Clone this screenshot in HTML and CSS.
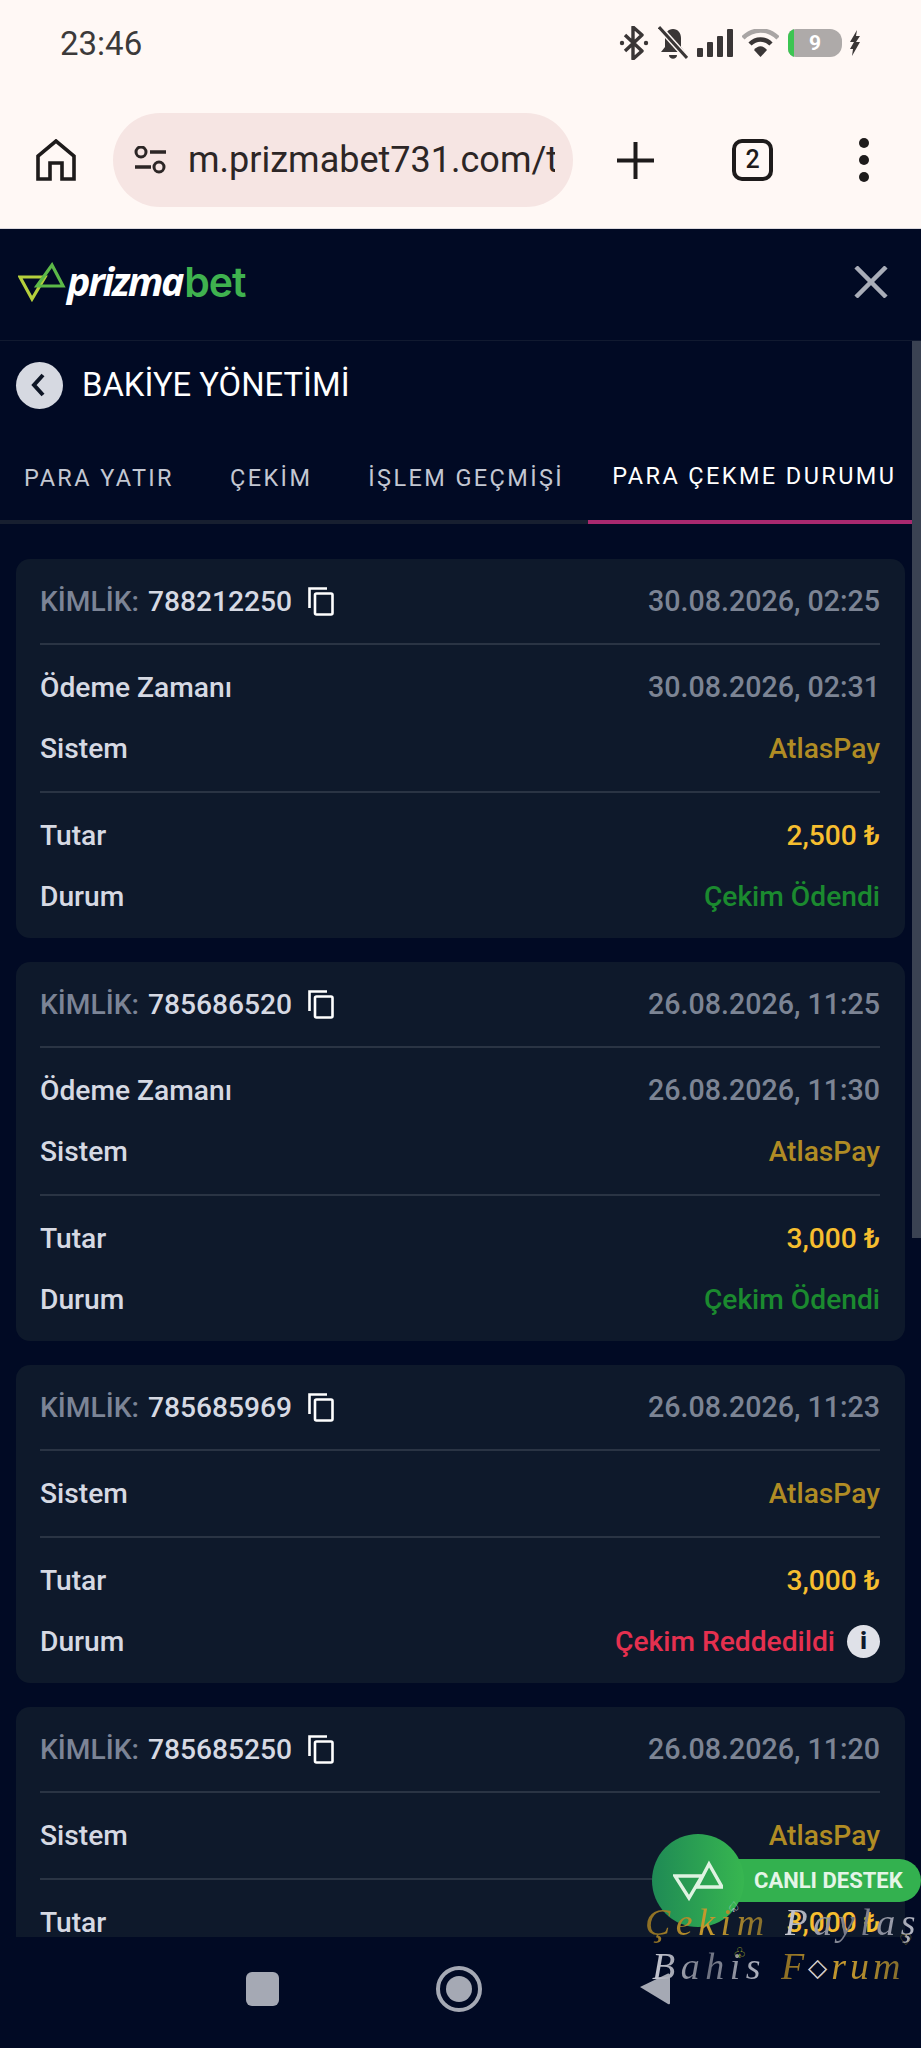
FILE: index.html
```html
<!DOCTYPE html>
<html lang="tr">
<head>
  <meta charset="UTF-8" />
  <title>Bakiye Yönetimi</title>
  <link rel="stylesheet" href="styles.css">
</head>
<body>
<div class="screen">

  <!-- Android / Chrome -->
  <div class="chrome">
    <div class="status">
      <span class="clock">23:46</span>
      <div class="status-icons">
        <svg width="30" height="34" viewBox="0 0 30 34"><path d="M6 9 L23 25 L14 33 V1 L23 9 L6 25" fill="none" stroke="#3a3636" stroke-width="3.4" stroke-linejoin="round"/><circle cx="3" cy="17" r="2.2" fill="#3a3636"/><circle cx="27" cy="17" r="2.2" fill="#3a3636"/></svg>
        <svg width="30" height="34" viewBox="0 0 30 34"><path d="M15 3c-5 0-8 4-8 9v9l-4 5h24l-4-5v-9c0-5-3-9-8-9z" fill="#3a3636"/><path d="M11 29h8c0 5-8 5-8 0z" fill="#3a3636"/><path d="M2 2 L29 32" stroke="#fff8f5" stroke-width="6"/><path d="M1 1 L29 32" stroke="#3a3636" stroke-width="3"/></svg>
        <svg width="36" height="28" viewBox="0 0 36 28"><g fill="#3a3636"><rect x="0" y="19" width="6" height="9" rx="1"/><rect x="10" y="13" width="6" height="15" rx="1"/><rect x="20" y="7" width="6" height="21" rx="1"/><rect x="30" y="0" width="6" height="28" rx="1"/></g></svg>
        <svg width="37" height="28" viewBox="0 0 37 28"><path d="M1 9 C11 -1 26 -1 36 9" fill="none" stroke="#a9a5a4" stroke-width="4.5"/><path d="M8 15 C14 9 23 9 29 15" fill="none" stroke="#3a3636" stroke-width="4.5"/><path d="M12 21 C16 16 21 16 25 21 L18.500 28z" fill="#3a3636"/></svg>
        <div class="battery"><span class="battery-level"></span><span class="battery-num">9</span></div>
        <svg class="bolt" width="12" height="26" viewBox="0 0 12 26"><path d="M8 0 L1 12 L5 12 L1 19 L4 19 L3 26 L11 12 L7 12 L11 6 L7 6z" fill="#3a3636"/></svg>
      </div>
    </div>
    <div class="toolbar">
      <svg class="home-icon" width="40" height="42" viewBox="0 0 40 42"><path d="M2 40 V17 L20 2 L38 17 V40 H26 V24 H14 V40z" fill="none" stroke="#1e1b1b" stroke-width="3.600" stroke-linejoin="miter"/></svg>
      <div class="address">
        <svg width="33" height="28" viewBox="0 0 33 28"><g fill="none" stroke="#2c2626" stroke-width="3"><circle cx="7" cy="6" r="5"/><circle cx="25" cy="21" r="5"/></g><path d="M16 6h16M1 21h16" stroke="#2c2626" stroke-width="3.400"/></svg>
        <span class="url">m.prizmabet731.com/t</span>
      </div>
      <svg class="plus-icon" width="37" height="37" viewBox="0 0 37 37"><path d="M18.500 0v37M0 18.500h37" stroke="#1e1b1b" stroke-width="4"/></svg>
      <div class="tab-count">2</div>
      <div class="dots"><i></i><i></i><i></i></div>
    </div>
  </div>

  <!-- Site header -->
  <header class="site-header">
    <div class="logo">
      <svg width="48" height="40" viewBox="0 0 48 40"><path d="M2 15 H27 L14 37z" fill="none" stroke="#b5cf3c" stroke-width="3.200"/><path d="M34 3 L45 24 H19z" fill="none" stroke="#5cb848" stroke-width="3.200"/></svg>
      <span class="logo-a">prizma</span><span class="logo-b">bet</span>
    </div>
    <svg width="34" height="32" viewBox="0 0 34 32"><path d="M2 1 L32 31 M32 1 L2 31" stroke="#a9adb8" stroke-width="4.500"/></svg>
  </header>

  <div class="panel">
    <div class="title-row">
      <div class="back-btn"><svg width="16" height="24" viewBox="0 0 16 24"><path d="M13 2 L4 12 L13 22" fill="none" stroke="#0e1626" stroke-width="4"/></svg></div>
      <h1>BAKİYE YÖNETİMİ</h1>
    </div>

    <nav class="tabs">
      <a>PARA YATIR</a>
      <a>ÇEKİM</a>
      <a>İŞLEM GEÇMİŞİ</a>
      <a class="active">PARA ÇEKME DURUMU</a>
    </nav>

    <div class="list">

      <div class="card">
        <div class="sec">
          <div class="row">
            <div class="id"><span class="id-label">KİMLİK:</span> <span>788212250</span>
              <svg class="copy" width="26" height="29" viewBox="0 0 26 29"><path d="M1.500 21V1.500H19" fill="none" stroke="#fff" stroke-width="2.600"/><rect x="7" y="6.500" width="17.500" height="21" rx="1.500" fill="none" stroke="#fff" stroke-width="2.600"/></svg>
            </div>
            <span class="muted">30.08.2026, 02:25</span>
          </div>
        </div>
        <div class="sec">
          <div class="row"><span>Ödeme Zamanı</span><span class="muted">30.08.2026, 02:31</span></div>
          <div class="row"><span>Sistem</span><span class="system">AtlasPay</span></div>
        </div>
        <div class="sec">
          <div class="row"><span>Tutar</span><span class="amount">2,500 ₺</span></div>
          <div class="row"><span>Durum</span><span class="paid">Çekim Ödendi</span></div>
        </div>
      </div>

      <div class="card">
        <div class="sec">
          <div class="row">
            <div class="id"><span class="id-label">KİMLİK:</span> <span>785686520</span>
              <svg class="copy" width="26" height="29" viewBox="0 0 26 29"><path d="M1.500 21V1.500H19" fill="none" stroke="#fff" stroke-width="2.600"/><rect x="7" y="6.500" width="17.500" height="21" rx="1.500" fill="none" stroke="#fff" stroke-width="2.600"/></svg>
            </div>
            <span class="muted">26.08.2026, 11:25</span>
          </div>
        </div>
        <div class="sec">
          <div class="row"><span>Ödeme Zamanı</span><span class="muted">26.08.2026, 11:30</span></div>
          <div class="row"><span>Sistem</span><span class="system">AtlasPay</span></div>
        </div>
        <div class="sec">
          <div class="row"><span>Tutar</span><span class="amount">3,000 ₺</span></div>
          <div class="row"><span>Durum</span><span class="paid">Çekim Ödendi</span></div>
        </div>
      </div>

      <div class="card">
        <div class="sec">
          <div class="row">
            <div class="id"><span class="id-label">KİMLİK:</span> <span>785685969</span>
              <svg class="copy" width="26" height="29" viewBox="0 0 26 29"><path d="M1.500 21V1.500H19" fill="none" stroke="#fff" stroke-width="2.600"/><rect x="7" y="6.500" width="17.500" height="21" rx="1.500" fill="none" stroke="#fff" stroke-width="2.600"/></svg>
            </div>
            <span class="muted">26.08.2026, 11:23</span>
          </div>
        </div>
        <div class="sec">
          <div class="row"><span>Sistem</span><span class="system">AtlasPay</span></div>
        </div>
        <div class="sec">
          <div class="row"><span>Tutar</span><span class="amount">3,000 ₺</span></div>
          <div class="row"><span>Durum</span><div class="status-cell"><span class="rejected">Çekim Reddedildi</span><span class="info">i</span></div></div>
        </div>
      </div>

      <div class="card">
        <div class="sec">
          <div class="row">
            <div class="id"><span class="id-label">KİMLİK:</span> <span>785685250</span>
              <svg class="copy" width="26" height="29" viewBox="0 0 26 29"><path d="M1.500 21V1.500H19" fill="none" stroke="#fff" stroke-width="2.600"/><rect x="7" y="6.500" width="17.500" height="21" rx="1.500" fill="none" stroke="#fff" stroke-width="2.600"/></svg>
            </div>
            <span class="muted">26.08.2026, 11:20</span>
          </div>
        </div>
        <div class="sec">
          <div class="row"><span>Sistem</span><span class="system">AtlasPay</span></div>
        </div>
        <div class="sec">
          <div class="row"><span>Tutar</span><span class="amount">3,000 ₺</span></div>
        </div>
      </div>

    </div>

    <div class="scrollbar"></div>
  </div>

  <!-- Android nav -->
  <div class="navbar">
    <span class="nav-square"></span>
    <span class="nav-circle"><i></i></span>
    <svg width="31" height="32" viewBox="0 0 31 32"><path d="M1 14 L29 0.500 Q31 0 31 2 V30 Q31 32 29 31z" fill="#a5a9b4"/></svg>
  </div>

  <!-- Canlı destek -->
  <div class="support">
    <div class="support-pill">CANLI DESTEK</div>
    <div class="support-circle">
      <svg width="50" height="44" viewBox="0 0 50 44"><path d="M2 17 H29 L16 39z" fill="none" stroke="#dff3e2" stroke-width="3.400"/><path d="M36 5 L49 28 H24z" fill="none" stroke="#dff3e2" stroke-width="3.400"/></svg>
    </div>
  </div>

  <!-- Filigran -->
  <div class="mark mark-top"><span class="gold">Çekim</span> <span class="silver">Paylaş</span></div>
  <div class="mark mark-bottom"><span class="silver">Bahis</span> <span class="gold forum">F<span class="mark-o">◇</span>rum</span></div>
  <span class="suit suit-spade">♤</span>
  <span class="suit suit-club">♧</span>
  <span class="suit suit-heart">♡</span>
</div>
</body>
</html>
```

FILE: styles.css
```css
* {
  box-sizing: border-box;
}

html, body {
  margin: 0;
  padding: 0;
  background: #010a24;
}

body {
  font-family: Roboto, "Liberation Sans", sans-serif;
}

.screen {
  position: relative;
  width: 921px;
  height: 2048px;
  overflow: hidden;
  display: flex;
  flex-direction: column;
}

/* Chrome */
.chrome {
  height: 229px;
  background: #fff8f5;
  border-bottom: 1px solid #dcd9de;
  flex: none;
}

.status {
  height: 86px;
  display: flex;
  align-items: center;
  justify-content: space-between;
  padding: 0 60px 0 60px;
}

.clock {
  font-size: 33px;
  color: #3c3a3a;
}

.status-icons {
  display: flex;
  align-items: center;
  gap: 9px;
}

.battery {
  position: relative;
  width: 54px;
  height: 28px;
  background: #aeaaa9;
  border-radius: 8px 12px 12px 8px;
  overflow: hidden;
  text-align: center;
  font-size: 21px;
  font-weight: 700;
  line-height: 28px;
  color: #fff;
}

.battery-level {
  position: absolute;
  left: 0;
  top: 0;
  bottom: 0;
  width: 6px;
  background: #3cc552;
}

.bolt {
  margin-left: -2px;
}

.toolbar {
  height: 142px;
  display: flex;
  align-items: center;
  padding-top: 6px;
}

.home-icon {
  margin-left: 36px;
}

.address {
  width: 460px;
  height: 94px;
  margin-left: 37px;
  padding: 0 18px 0 21px;
  background: #f6e5e3;
  border-radius: 47px;
  display: flex;
  align-items: center;
  gap: 21px;
}

.address svg {
  flex: none;
}

.url {
  font-size: 36px;
  color: #2c2626;
  white-space: nowrap;
  overflow: hidden;
}

.plus-icon {
  margin-left: 44px;
}

.tab-count {
  width: 41px;
  height: 42px;
  margin-left: 78px;
  border: 4px solid #1e1b1b;
  border-radius: 10px;
  font-size: 25px;
  font-weight: 500;
  line-height: 34px;
  text-align: center;
  color: #1e1b1b;
}

.dots {
  margin-left: 86px;
  display: flex;
  flex-direction: column;
  gap: 7px;
}

.dots i {
  width: 10px;
  height: 10px;
  border-radius: 50%;
  background: #1e1b1b;
}

/* Header */
.site-header {
  height: 112px;
  flex: none;
  padding: 0 33px 6px 18px;
  display: flex;
  align-items: center;
  justify-content: space-between;
  background: #010a24;
  border-bottom: 1px solid #111a30;
}

.logo {
  display: flex;
  align-items: center;
  font-size: 39.500px;
  line-height: 40px;
}

.logo svg {
  margin-right: 1px;
}

.logo-a {
  font-family: "Open Sans", sans-serif;
  font-weight: 700;
  font-style: italic;
  letter-spacing: -2.300px;
  color: #fff;
  margin-bottom: 2px;
}

.logo-b {
  font-family: Inter, sans-serif;
  font-weight: 600;
  font-size: 41px;
  letter-spacing: -1px;
  color: #3fb24f;
  margin-left: 2px;
}

/* Panel */
.panel {
  position: relative;
  flex: 1;
  overflow: hidden;
  background: #010a24;
}

.title-row {
  height: 88px;
  padding-left: 16px;
  display: flex;
  align-items: center;
  gap: 19px;
}

.back-btn {
  width: 47px;
  height: 47px;
  border-radius: 50%;
  background: #d6d9e1;
  display: flex;
  align-items: center;
  justify-content: center;
  padding-right: 3px;
}

h1 {
  margin: 0;
  font-size: 32.800px;
  font-weight: 400;
  color: #fff;
}

.tabs {
  height: 95px;
  display: flex;
  gap: 8px;
  border-bottom: 4px solid #171f30;
}

.tabs a {
  height: 95px;
  padding: 3px 24px 0;
  display: flex;
  align-items: center;
  font-size: 23.500px;
  letter-spacing: 2.400px;
  color: #c3c7d2;
  white-space: nowrap;
}

.tabs a.active {
  flex: 1;
  margin-left: -8px;
  color: #fff;
  border-bottom: 4px solid #a8296f;
}

.list {
  padding: 35px 16px 0;
  display: flex;
  flex-direction: column;
  gap: 24px;
}

.card {
  padding: 0 25px 0 24px;
  background: #0e192b;
  border-radius: 14px;
  flex: none;
}

.sec {
  padding: 24px 0;
  display: flex;
  flex-direction: column;
  gap: 25px;
  border-bottom: 2px solid #2a3444;
}

.sec:nth-child(2) {
  padding-bottom: 25px;
}

.sec:last-child {
  border-bottom: none;
}

.row {
  height: 36px;
  display: flex;
  align-items: center;
  justify-content: space-between;
  font-size: 28.200px;
  font-weight: 500;
  color: #d6d9e3;
  white-space: nowrap;
}

.id {
  display: flex;
  align-items: center;
  gap: 9px;
}

.id-label {
  color: #7c8496;
}

.copy {
  margin-left: 7px;
}

.muted {
  font-size: 28.600px;
  color: #7c8494;
}

.system {
  color: #b08c24;
}

.amount {
  color: #f6be2f;
}

.paid {
  color: #1b8a2f;
}

.rejected {
  color: #e5304f;
}

.status-cell {
  display: flex;
  align-items: center;
  gap: 12px;
}

.info {
  width: 33px;
  height: 33px;
  border-radius: 50%;
  background: #dfe1e8;
  color: #0e192b;
  font-size: 24px;
  font-weight: 900;
  line-height: 33px;
  text-align: center;
}

.scrollbar {
  position: absolute;
  top: 0;
  right: 0;
  width: 9px;
  height: 897px;
  background: #3a4252;
}

/* Android nav */
.navbar {
  height: 111px;
  flex: none;
  padding: 0 6px 7px 0;
  background: #010a24;
  display: flex;
  align-items: center;
  justify-content: center;
  gap: 157px;
}

.nav-square {
  width: 33px;
  height: 34px;
  border-radius: 6px;
  background: #a5a9b4;
}

.nav-circle {
  width: 46px;
  height: 46px;
  border: 4px solid #a5a9b4;
  border-radius: 50%;
  display: flex;
  align-items: center;
  justify-content: center;
}

.nav-circle i {
  width: 26px;
  height: 26px;
  border-radius: 50%;
  background: #a5a9b4;
}

/* Overlays */
.support {
  position: absolute;
  left: 652px;
  top: 1834px;
  width: 269px;
  height: 93px;
  display: flex;
  align-items: center;
}

.support-pill {
  position: absolute;
  left: 40px;
  right: 0;
  height: 43px;
  padding-left: 62px;
  border-radius: 22px;
  background: #33b14f;
  color: #e4f5e7;
  font-size: 22px;
  font-weight: 700;
  line-height: 44px;
  white-space: nowrap;
}

.support-circle {
  position: relative;
  width: 92px;
  height: 93px;
  border-radius: 50%;
  background: linear-gradient(90deg, #1f8a55, #37b650);
  display: flex;
  align-items: center;
  justify-content: center;
}

.mark {
  position: absolute;
  font-family: "Liberation Serif", serif;
  font-style: italic;
  font-weight: 400;
  font-size: 38px;
  line-height: 44px;
  white-space: nowrap;
  letter-spacing: 5.500px;
}

.mark-top {
  left: 645px;
  top: 1900px;
}

.mark-bottom {
  left: 652px;
  top: 1944px;
}

.forum {
  letter-spacing: 4px;
}

.gold {
  background: linear-gradient(90deg, #8a6d24, #c79a2e, #7f6a2c);
  -webkit-background-clip: text;
  background-clip: text;
  color: transparent;
}

.silver {
  background: linear-gradient(90deg, #c8cad4, #6d7180, #b9bcc8);
  -webkit-background-clip: text;
  background-clip: text;
  color: transparent;
}

.mark-o {
  font-style: normal;
  font-weight: 400;
  font-size: 25px;
  vertical-align: 3px;
  color: #c9ccd6;
}

.suit {
  position: absolute;
  font-family: "DejaVu Sans", sans-serif;
  font-size: 15px;
  line-height: 16px;
}

.suit-spade {
  left: 727px;
  top: 1899px;
  color: #c9ccd6;
}

.suit-club {
  left: 733px;
  top: 1945px;
  color: #a8b32c;
}

.suit-heart {
  left: 899px;
  top: 1932px;
  color: #8a7a2c;
}
```
